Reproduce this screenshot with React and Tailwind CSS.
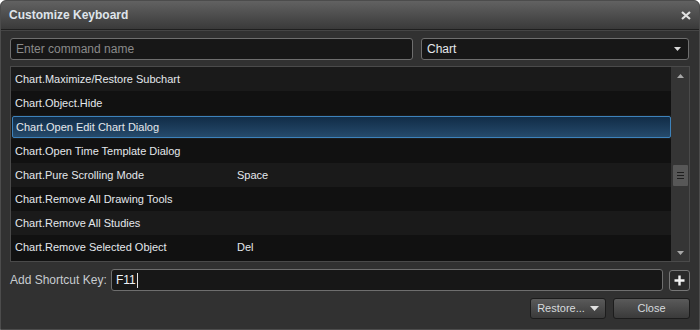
const rows = [
  { name: 'Chart.Maximize/Restore Subchart', key: '' },
  { name: 'Chart.Object.Hide', key: '' },
  { name: 'Chart.Open Edit Chart Dialog', key: '', selected: true },
  { name: 'Chart.Open Time Template Dialog', key: '' },
  { name: 'Chart.Pure Scrolling Mode', key: 'Space' },
  { name: 'Chart.Remove All Drawing Tools', key: '' },
  { name: 'Chart.Remove All Studies', key: '' },
  { name: 'Chart.Remove Selected Object', key: 'Del' },
]

const font = { fontFamily: '"Liberation Sans", Arial, sans-serif' }

export default function App() {
  return (
    <div
      className="w-[700px] h-[330px] bg-[#313131] rounded-t-[6px] overflow-hidden border border-[#4c4c4c] flex flex-col text-[11px] text-[#e4e8ec]"
      style={font}
    >
      {/* Title bar */}
      <div className="h-[29px] shrink-0 bg-gradient-to-b from-[#626262] to-[#3a3a3a] border-b border-[#1f1f1f] flex items-center justify-between pl-[8px] pr-[8px]">
        <span className="text-[12px] font-bold text-[#dfe4ea]">Customize Keyboard</span>
        <svg width="10" height="9" viewBox="0 0 10 9" className="mt-[1px]">
          <path d="M1 1 L9 8 M9 1 L1 8" stroke="#e0e0e0" strokeWidth="2.2" />
        </svg>
      </div>

      <div className="flex flex-col px-[9px] pt-[7px] border-t border-[#454545]">
        {/* Search / category */}
        <div className="flex gap-[8px]">
          <div className="w-[403px] h-[22px] rounded-[3px] border border-[#6e6e6e] bg-[#171717] flex items-center px-[5px] text-[12px] text-[#8a8a8a]">
            Enter command name
          </div>
          <div className="w-[268px] h-[22px] rounded-[3px] border border-[#6e6e6e] bg-[#171717] flex items-center justify-between pl-[5px] pr-[7px] text-[12px] text-[#e4e8ec]">
            <span>Chart</span>
            <svg width="7" height="4" viewBox="0 0 7 4">
              <path d="M0 0 H7 L3.5 4 Z" fill="#d8d8d8" />
            </svg>
          </div>
        </div>

        {/* Command list */}
        <div className="mt-[6px] h-[196px] border border-[#4a4a4a] bg-[#111] flex overflow-hidden">
          <div className="flex-1 flex flex-col">
            {rows.map((r, i) => (
              <div
                key={r.name}
                className={`h-[24px] shrink-0 flex ${i % 2 === 0 ? 'bg-[#1a1a1a]' : 'bg-[#111111]'}`}
              >
                {r.selected ? (
                  <div className="flex-1 my-[1px] ml-[1px] flex items-center pl-[3px] rounded-[2px] border border-[#3d82bb] bg-gradient-to-b from-[#112c47] to-[#264b6c]">
                    <span className="w-[222px]">{r.name}</span>
                    <span>{r.key}</span>
                  </div>
                ) : (
                  <div className="flex-1 flex items-center pl-[4px]">
                    <span className="w-[222px]">{r.name}</span>
                    <span>{r.key}</span>
                  </div>
                )}
              </div>
            ))}
          </div>
          {/* Scrollbar */}
          <div className="w-[18px] bg-[#353535] flex flex-col items-center pt-[7px] pb-[6px]">
            <svg width="7" height="4" viewBox="0 0 7 4">
              <path d="M0 4 H7 L3.5 0 Z" fill="#a8a8a8" />
            </svg>
            <div className="mt-[87px] w-[15px] h-[21px] bg-[#575757] rounded-[1px] flex flex-col items-center justify-center gap-[2px]">
              <div className="w-[7px] h-[1px] bg-[#1e1e1e]" />
              <div className="w-[7px] h-[1px] bg-[#1e1e1e]" />
              <div className="w-[7px] h-[1px] bg-[#1e1e1e]" />
            </div>
            <div className="flex-1" />
            <svg width="7" height="4" viewBox="0 0 7 4">
              <path d="M0 0 H7 L3.5 4 Z" fill="#a8a8a8" />
            </svg>
          </div>
        </div>

        {/* Shortcut key */}
        <div className="mt-[7px] flex items-center">
          <span className="w-[101px] text-[12px] text-[#c8ccd0]">Add Shortcut Key:</span>
          <div className="w-[552px] h-[22px] rounded-[3px] border border-[#6e6e6e] bg-[#171717] flex items-center px-[4px] text-[12px] text-[#eef2f6]">
            <span>F11</span>
            <span className="ml-[1px] w-[1px] h-[15px] bg-[#e6e6e6]" />
          </div>
          <div className="ml-[6px] w-[21px] h-[21px] rounded-[3px] border border-[#777] bg-[#2a2a2a] flex items-center justify-center">
            <svg width="11" height="11" viewBox="0 0 11 11">
              <path d="M5.5 0.5 V10.5 M0.5 5.5 H10.5" stroke="#f2f2f2" strokeWidth="2.4" />
            </svg>
          </div>
        </div>

        {/* Buttons */}
        <div className="mt-[7px] flex justify-end gap-[7px]">
          <div className="w-[76px] h-[21px] rounded-[3px] border border-[#1c1c1c] bg-gradient-to-b from-[#5a5a5a] to-[#3a3a3a] flex items-center justify-center gap-[5px] text-[11px] text-[#d6dade]">
            <span>Restore...</span>
            <svg width="9" height="5" viewBox="0 0 9 5">
              <path d="M0 0 H9 L4.5 5 Z" fill="#e0e0e0" />
            </svg>
          </div>
          <div className="w-[77px] h-[21px] rounded-[3px] border border-[#1c1c1c] bg-gradient-to-b from-[#5a5a5a] to-[#3a3a3a] flex items-center justify-center text-[11px] text-[#d6dade]">
            Close
          </div>
        </div>
      </div>
    </div>
  )
}
